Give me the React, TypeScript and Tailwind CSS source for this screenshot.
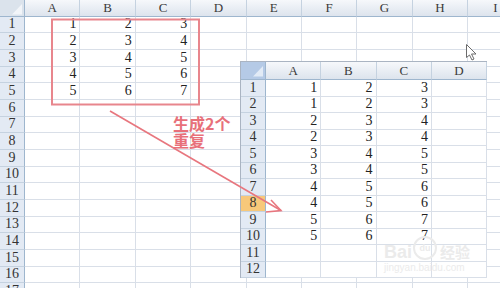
import React from "react";

const bigCols = ["A", "B", "C", "D", "E", "F", "G", "H", "I"];
const bigData: Record<number, number[]> = {
  1: [1, 2, 3],
  2: [2, 3, 4],
  3: [3, 4, 5],
  4: [4, 5, 6],
  5: [5, 6, 7],
};

const smallCols = ["A", "B", "C", "D"];
const smallData: number[][] = [
  [1, 2, 3],
  [1, 2, 3],
  [2, 3, 4],
  [2, 3, 4],
  [3, 4, 5],
  [3, 4, 5],
  [4, 5, 6],
  [4, 5, 6],
  [5, 6, 7],
  [5, 6, 7],
  [],
  [],
];

function Corner({ fill, tri }: { fill: string; tri: string }) {
  return (
    <div className={`relative border-r border-b border-[#9eb6ce] ${fill}`}>
      <svg className="absolute inset-0" width="25" height="18" viewBox="0 0 25 18">
        <polygon points="22,4 22,14.5 12,14.5" className={tri} />
      </svg>
    </div>
  );
}

function ColHead({ label }: { label: string }) {
  return (
    <div className="flex items-end justify-center border-r border-b border-r-[#c5d2e0] border-b-[#9eb6ce] bg-gradient-to-b from-[#f6f8fb] to-[#dde4ed] pb-[1px] text-[13px] leading-[14px] text-[#3a3a3a]">
      {label}
    </div>
  );
}

function RowHead({ n, active }: { n: number; active?: boolean }) {
  return (
    <div
      className={`flex items-end justify-center border-r border-b border-r-[#9eb6ce] border-b-[#c5d2e0] pb-[1px] text-[14px] leading-[14px] text-[#333] ${
        active ? "bg-[#f7c87a]" : "bg-[#e3eaf4]"
      }`}
    >
      {n}
    </div>
  );
}

function Cell({ v }: { v?: number }) {
  return (
    <div className="flex items-end justify-end border-r border-b border-[#d9dfe8] bg-white pr-[3px] pb-[1px] text-[14px] leading-[14px] text-[#222]">
      {v ?? ""}
    </div>
  );
}

export default function App() {
  const rows = Array.from({ length: 17 }, (_, i) => i + 1);

  return (
    <div className="relative h-[288px] w-[500px] overflow-hidden bg-white font-['Liberation_Serif','DejaVu_Serif',serif]">
      {/* big sheet */}
      <div className="grid grid-cols-[25px_repeat(9,55.4px)] grid-rows-[16.67px_repeat(17,16.67px)]">
        <Corner fill="bg-[#dbe3ec]" tri="fill-[#f2f5f9]" />
        {bigCols.map((c) => (
          <ColHead key={c} label={c} />
        ))}
        {rows.map((r) => (
          <React.Fragment key={r}>
            <RowHead n={r} />
            {bigCols.map((c, ci) => (
              <Cell key={c} v={bigData[r]?.[ci]} />
            ))}
          </React.Fragment>
        ))}
      </div>

      {/* second sheet, pasted on top */}
      <div className="absolute left-[240px] top-[61px] border-l border-t border-[#aab4c2] bg-white">
        <div className="grid grid-cols-[25px_repeat(4,55.3px)] grid-rows-[18px_repeat(12,16.5px)]">
          <Corner fill="bg-[#b5cae6]" tri="fill-[#e2ebf6]" />
          {smallCols.map((c) => (
            <ColHead key={c} label={c} />
          ))}
          {smallData.map((row, i) => (
            <React.Fragment key={i}>
              <RowHead n={i + 1} active={i === 7} />
              {smallCols.map((c, ci) => (
                <Cell key={c} v={row[ci]} />
              ))}
            </React.Fragment>
          ))}
        </div>
      </div>

      {/* baidu watermark */}
      <div className="absolute left-[384px] top-[236px] flex flex-col items-start text-[#ebebeb]">
        <div className="flex items-end gap-[1px] font-['Liberation_Sans',sans-serif] text-[18px] font-bold leading-[16px]">
          <span>Bai</span>
          <span className="flex h-[24px] w-[24px] items-center justify-center rounded-full border-2 border-[#ebebeb] text-[9px] leading-none">
            du
          </span>
          <span className="ml-[2px] font-['Noto_Sans_CJK_SC',sans-serif] text-[15px]">经验</span>
        </div>
        <div className="mt-[3px] font-['Liberation_Sans',sans-serif] text-[10px] leading-[10px]">
          jingyan.baidu.com
        </div>
      </div>

      {/* annotation */}
      <svg className="pointer-events-none absolute inset-0" width="500" height="288" viewBox="0 0 500 288">
        <rect x="52" y="19.5" width="147" height="85" fill="none" stroke="#e8868d" strokeWidth="2" />
        <line x1="110" y1="111" x2="281" y2="210.5" stroke="#e8767e" strokeWidth="1.6" />
        <polyline points="266,212 281,210.5 271,200" fill="none" stroke="#e8767e" strokeWidth="1.6" />
        <polygon
          points="466.5,44.5 466.5,57.5 469.5,55 472,60 474,59 471.5,54 476,54"
          fill="#fff"
          stroke="#6b6b6b"
          strokeWidth="1"
          strokeLinejoin="round"
        />
      </svg>

      <div className="absolute left-[173px] top-[115px] font-['Noto_Sans_CJK_SC',sans-serif] text-[16px] font-bold leading-[17px] text-[#e8707a]">
        生成2个
        <br />
        重复
      </div>
    </div>
  );
}
